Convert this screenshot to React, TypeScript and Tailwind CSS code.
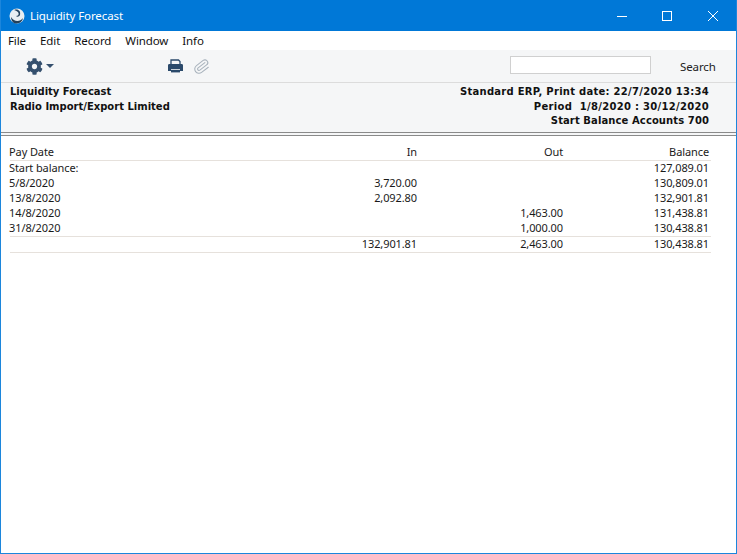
import { FaCog } from "react-icons/fa";
import { Paperclip } from "lucide-react";

const menuItems = ["File", "Edit", "Record", "Window", "Info"];

const rows = [
  { date: "Start balance:", in: "", out: "", balance: "127,089.01" },
  { date: "5/8/2020", in: "3,720.00", out: "", balance: "130,809.01" },
  { date: "13/8/2020", in: "2,092.80", out: "", balance: "132,901.81" },
  { date: "14/8/2020", in: "", out: "1,463.00", balance: "131,438.81" },
  { date: "31/8/2020", in: "", out: "1,000.00", balance: "130,438.81" },
];

const gridCols = "grid grid-cols-[261px_146px_146px_146px_2px]";

function Row({ date, inValue, out, balance, className }: { date: string; inValue: string; out: string; balance: string; className?: string }) {
  return (
    <div className={`${gridCols} ${className ?? ""}`}>
      <span className="-ml-px">{date}</span>
      <span className="text-right">{inValue}</span>
      <span className="text-right">{out}</span>
      <span className="text-right">{balance}</span>
    </div>
  );
}

export default function App() {
  return (
    <div className="flex h-[554px] w-[737px] flex-col overflow-hidden border-x border-b border-x-[#1c86dc] border-b-[#1c86dc] bg-white font-['Noto_Sans',sans-serif] text-[11px] tracking-[-0.1px] text-[#1a1a1a]">
      <div className="flex h-[31px] shrink-0 items-center bg-[#0078d7] pl-2 text-white">
        <svg viewBox="0 0 16 16" className="h-[16px] w-[16px] shrink-0">
          <circle cx="8" cy="8" r="7.5" fill="#e8eef2" />
          <path d="M2 9c3 5 9 5 12 1-1 5-5 5.500-7 5.500C4 15.500 2 12 2 9Z" fill="#23415c" />
          <path d="M5 2c4-1.500 7 1 6 5-1 2-3 2-4 1 2 0 3-1 2.500-3C9 3.500 7 2.500 5 2Z" fill="#23415c" />
        </svg>
        <span className="ml-[5px] text-[11.5px]">Liquidity Forecast</span>
        <div className="ml-auto flex items-center">
          <svg viewBox="0 0 10 10" className="mr-[35px] h-[10px] w-[10px]">
            <path d="M0 5.500H10" stroke="white" strokeWidth="1" />
          </svg>
          <svg viewBox="0 0 10 10" className="mr-[36px] h-[10px] w-[10px]">
            <rect x="0.500" y="0.500" width="9" height="9" fill="none" stroke="white" strokeWidth="1" />
          </svg>
          <svg viewBox="0 0 10 10" className="mr-[18px] h-[10px] w-[10px]">
            <path d="M0 0L10 10M10 0L0 10" stroke="white" strokeWidth="1" />
          </svg>
        </div>
      </div>

      <div className="flex h-[19px] shrink-0 items-center gap-[14px] bg-white pl-[7px] text-[11.5px] text-[#111]">
        {menuItems.map((item) => (
          <span key={item}>{item}</span>
        ))}
      </div>

      <div className="flex h-[33px] shrink-0 items-center border-b border-[#dcdcdc] bg-[#f5f6f7]">
        <FaCog className="ml-[25px] h-[17px] w-[17px] text-[#35506e]" />
        <span className="ml-[3px] h-0 w-0 border-x-[4px] border-t-[4px] border-x-transparent border-t-[#35506e]" />
        <svg viewBox="0 0 15 14" className="ml-[114px] h-[14px] w-[15px] text-[#2b4a6b]">
          <path d="M3 5V1h7.500L12 2.500V5" fill="none" stroke="currentColor" strokeWidth="1.300" />
          <path d="M0 6.500C0 5.500.5 5 1.500 5h12c1 0 1.500.5 1.500 1.500V12h-3v-2H3v2H0Z" fill="currentColor" />
          <rect x="3" y="10.800" width="9" height="2.600" fill="currentColor" />
        </svg>
        <Paperclip className="ml-[10px] h-[17px] w-[17px] rotate-[8deg] text-[#a9b3bd]" strokeWidth={1.5} />
        <div className="ml-[300px] mb-[2px] h-[18px] w-[141px] border border-[#d0d0d0] bg-white" />
        <span className="ml-[29px] mt-[2px] text-[11.5px] text-[#222]">Search</span>
      </div>

      <div className="flex h-[49px] shrink-0 justify-between bg-[#f5f6f7] pl-[9px] pr-[27px] pt-[2px] font-['DejaVu_Sans',sans-serif] text-[10px] font-bold leading-[14.5px] tracking-normal text-[#111]">
        <div className="flex flex-col">
          <span>Liquidity Forecast</span>
          <span>Radio Import/Export Limited</span>
        </div>
        <div className="flex flex-col items-end">
          <span className="tracking-[0.27px]">Standard ERP, Print date: 22/7/2020 13:34</span>
          <span className="whitespace-pre tracking-[0.3px]">Period  1/8/2020 : 30/12/2020</span>
          <span className="tracking-[0.1px]">Start Balance Accounts 700</span>
        </div>
      </div>

      <div className="h-[4px] shrink-0 border-y border-[#8a8a8a] bg-[#f5f6f7]" />

      <div className="flex flex-col pl-[9px] pt-[8px] leading-[15px]">
        <Row date="Pay Date" inValue="In" out="Out" balance="Balance" className="w-[701px] border-b border-[#e6e1dc] pb-px" />
        {rows.map((row) => (
          <Row key={row.date} date={row.date} inValue={row.in} out={row.out} balance={row.balance} className="h-[15px] w-[701px] leading-[13px]" />
        ))}
        <Row date="" inValue="132,901.81" out="2,463.00" balance="130,438.81" className="h-[17px] w-[701px] border-y border-[#e6e1dc] leading-[13px]" />
      </div>
    </div>
  );
}
